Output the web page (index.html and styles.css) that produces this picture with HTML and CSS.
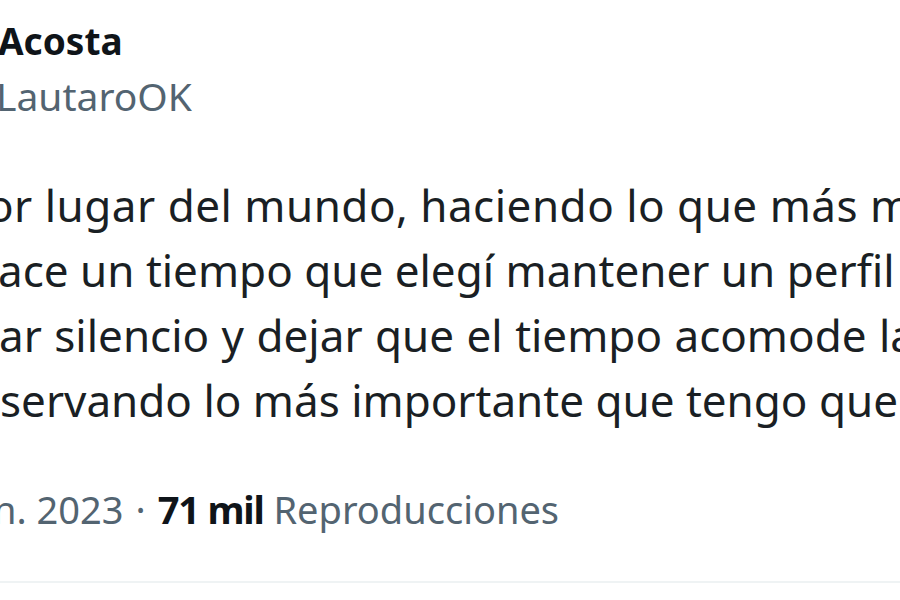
FILE: index.html
```html
<!DOCTYPE html>
<html lang="es">
<head>
<meta charset="utf-8">
<title>Tweet</title>
<link rel="stylesheet" href="styles.css">
</head>
<body>
<main class="tweet">
  <header class="author">
    <div class="name">Acosta</div>
    <div class="handle">LautaroOK</div>
  </header>
  <div class="text">
    <p class="line line-1">or lugar del mundo, haciendo lo que más me gusta.</p>
    <p class="line line-2">ace un tiempo que elegí mantener un perfil bajo,</p>
    <p class="line line-3">ar silencio y dejar que el tiempo acomode las cosas,</p>
    <p class="line line-4">servando lo más importante que tengo que es mi familia.</p>
  </div>
  <div class="meta">
    <span class="date">n. 2023</span>
    <span class="dot">·</span>
    <span class="views"><strong class="count">71 mil</strong> Reproducciones</span>
  </div>
  <div class="divider"></div>
</main>
</body>
</html>
```
FILE: styles.css
```css
html, body {
  margin: 0;
  padding: 0;
  background: #ffffff;
}
body {
  width: 900px;
  height: 600px;
  overflow: hidden;
  font-family: "Noto Sans", "Open Sans", sans-serif;
  color: #0f1419;
}
.tweet {
  display: flex;
  flex-direction: column;
  padding-top: 17px;
}
.author {
  display: flex;
  flex-direction: column;
}
.name {
  font-size: 37px;
  font-weight: 700;
  line-height: 48px;
  margin-left: -2px;
  white-space: nowrap;
}
.handle {
  margin-top: 6px;
  font-size: 39px;
  line-height: 50px;
  color: #536471;
  margin-left: -4px;
  white-space: nowrap;
}
.text {
  margin-top: 52px;
  display: flex;
  flex-direction: column;
}
.line {
  margin: 0;
  font-size: 44px;
  line-height: 65px;
  white-space: nowrap;
  color: #1a1f24;
}
.line-1 { margin-left: -13px; letter-spacing: 0.5px; }
.line-2 { margin-left: -2px; }
.line-3 { margin-left: -1px; word-spacing: 1px; }
.line-4 { margin-left: 0; }
.meta {
  margin-top: 52px;
  display: flex;
  align-items: baseline;
  gap: 12px;
  font-size: 38px;
  line-height: 48px;
  color: #536471;
  white-space: nowrap;
  margin-left: -7px;
}
.count {
  color: #0f1419;
  font-weight: 700;
  letter-spacing: -1.2px;
}
.divider {
  margin-top: 48px;
  height: 2px;
  background: #eff3f4;
}
```
